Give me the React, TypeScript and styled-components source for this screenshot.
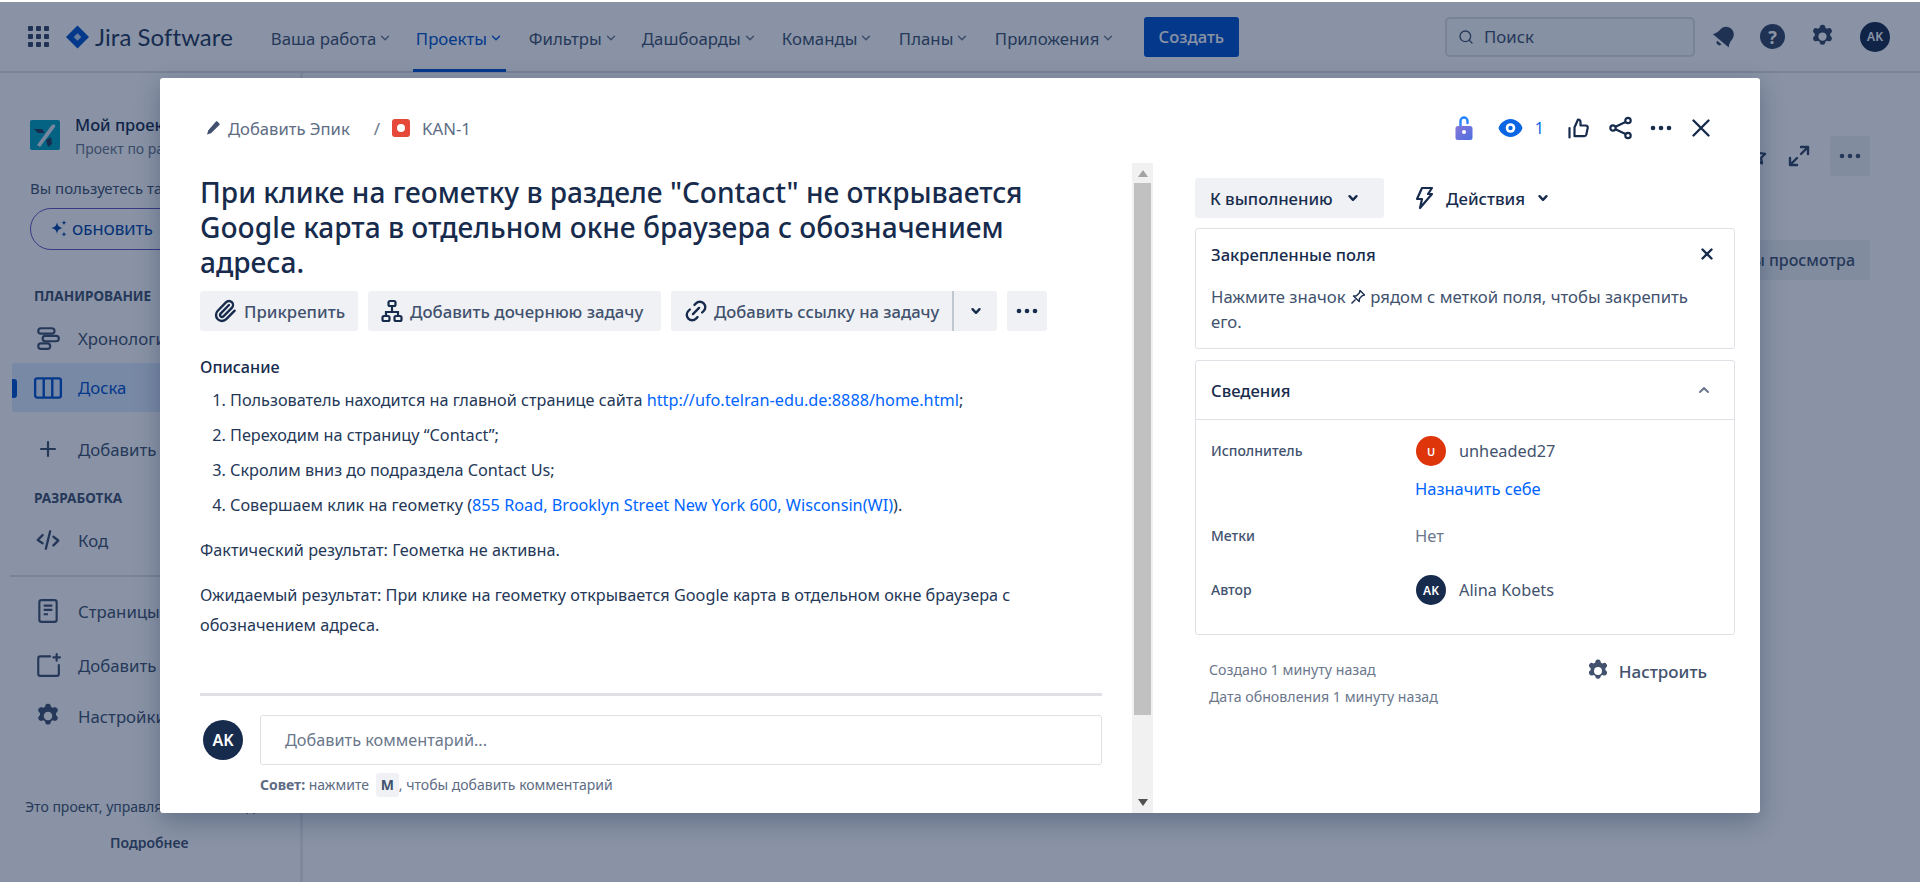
import styled, { createGlobalStyle } from 'styled-components';
import { ChevronDown, ChevronUp, Search, Plus, X, Link2, Paperclip } from 'lucide-react';

const GlobalStyle = createGlobalStyle`
  html, body {
    margin: 0;
    padding: 0;
    background: #fff;
    font-family: "Noto Sans", "Open Sans", sans-serif;
    color: #172b4d;
  }
  * {
    box-sizing: border-box;
  }
`;

const navItems = [
  { label: 'Ваша работа', width: 145 },
  { label: 'Проекты', width: 113, active: true },
  { label: 'Фильтры', width: 113 },
  { label: 'Дашбоарды', width: 140 },
  { label: 'Команды', width: 117 },
  { label: 'Планы', width: 96 },
  { label: 'Приложения', width: 149 },
];

function GearIcon({ size = 24 }: { size?: number }) {
  return (
    <svg width={size} height={size} viewBox="2.500 1.500 19 20" fill="none">
      <path
        fillRule="evenodd"
        clipRule="evenodd"
        fill="currentColor"
        d="M11.7 2h.6c.9 0 1.6.6 1.8 1.4l.3 1.2c.4.2.8.3 1.2.6l1.2-.4c.8-.3 1.7.1 2.2.8l.3.5c.4.8.3 1.7-.3 2.3l-.9.9c.1.5.1 1 0 1.4l.9.9c.6.6.7 1.5.3 2.3l-.3.5c-.5.7-1.4 1.1-2.2.8l-1.2-.4c-.4.3-.8.4-1.2.6l-.3 1.2c-.2.8-.9 1.4-1.8 1.4h-.6c-.9 0-1.6-.6-1.8-1.4l-.3-1.2c-.4-.2-.8-.3-1.2-.6l-1.2.4c-.8.3-1.7-.1-2.2-.8l-.3-.5c-.4-.8-.3-1.7.3-2.3l.9-.9a5 5 0 0 1 0-1.4l-.9-.9c-.6-.6-.7-1.5-.3-2.3l.3-.5c.5-.7 1.4-1.1 2.2-.8l1.2.4c.4-.3.8-.4 1.2-.6l.3-1.2C10.1 2.6 10.800 2 11.700 2ZM12 8.200a3.300 3.300 0 1 0 0 6.600 3.300 3.300 0 0 0 0-6.600Z"
      />
    </svg>
  );
}

function DotsIcon() {
  return (
    <svg width="24" height="24" viewBox="0 0 24 24" fill="currentColor">
      <circle cx="4" cy="12" r="2.300" />
      <circle cx="12" cy="12" r="2.300" />
      <circle cx="20" cy="12" r="2.300" />
    </svg>
  );
}

function SmallChevron() {
  return (
    <svg width="12" height="12" viewBox="0 0 12 12" fill="none" stroke="currentColor" strokeWidth="2.400" strokeLinecap="round" strokeLinejoin="round">
      <path d="M2.500 4.200 6 7.800l3.500-3.600" />
    </svg>
  );
}

function App() {
  return (
    <>
      <GlobalStyle />
      <Page>
        <TopBar>
          <GridIcon>
            {Array.from({ length: 9 }).map((_, index) => (
              <i key={index} />
            ))}
          </GridIcon>
          <Logo>
            <svg width="23" height="24" viewBox="0 0 24 24">
              <path fill="#0052cc" d="M12 0 24 12 12 24 0 12Z" />
              <path fill="#c0d6f5" d="M12 8 16 12 12 16 8 12Z" />
            </svg>
            <span>Jira Software</span>
          </Logo>
          <Nav>
            {navItems.map((item) => (
              <NavItem key={item.label} $active={item.active} $width={item.width}>
                {item.label}
                <ChevronDown size={14} strokeWidth={2.4} />
              </NavItem>
            ))}
          </Nav>
          <CreateButton>Создать</CreateButton>
          <SearchBox>
            <Search size={16} strokeWidth={2} />
            <span>Поиск</span>
          </SearchBox>
          <TopIcons>
            <svg width="22" height="26" viewBox="2 2 20 20" fill="currentColor">
              <g transform="rotate(40 12 12)">
                <path d="M12 2a7 7 0 0 0-7 7c0 5-2.500 7.500-2.500 7.500h19S19 14 19 9a7 7 0 0 0-7-7Z" />
                <path d="M9.500 18.500h5a2.500 2.500 0 0 1-5 0Z" />
              </g>
            </svg>
            <HelpIcon>?</HelpIcon>
            <GearIcon size={25} />
            <Avatar $size={30} $font={12}>AK</Avatar>
          </TopIcons>
        </TopBar>

        <Workspace>
          <Sidebar>
            <ProjectRow>
              <ProjectLogo>
                <svg width="30" height="30" viewBox="0 0 30 30">
                  <rect width="30" height="30" rx="2" fill="#00a3bf" />
                  <path fill="#dfe6f2" d="M7 25 21 6c2-2 5-2 4 1L10 27Z" />
                  <path fill="#253858" d="M4 9h8l3 4H8ZM16 20l5-3 1 7-4 3Z" />
                </svg>
              </ProjectLogo>
              <div>
                <ProjectName>Мой проект</ProjectName>
                <ProjectType>Проект по разработке</ProjectType>
              </div>
            </ProjectRow>
            <PlanNote>Вы пользуетесь тарифом Free</PlanNote>
            <UpgradeButton>
              <svg width="18" height="18" viewBox="0 0 18 18" fill="#0747a6">
                <path d="M7 2c.7 4 2 5.300 6 6-4 .7-5.300 2-6 6-.7-4-2-5.300-6-6 4-.7 5.300-2 6-6ZM14 0c.3 1.800.9 2.400 2.700 2.700-1.800.3-2.400.9-2.700 2.700-.3-1.800-.9-2.400-2.700-2.700C13.100 2.400 13.700 1.800 14 0ZM14 11.500c.3 1.800.9 2.400 2.700 2.700-1.800.3-2.400.9-2.700 2.700-.3-1.800-.9-2.400-2.700-2.700 1.800-.3 2.400-.9 2.700-2.700Z" />
              </svg>
              ОБНОВИТЬ
            </UpgradeButton>
            <SectionTitle $top={36}>Планирование</SectionTitle>
            <SideItem>
              <svg width="26" height="26" viewBox="0 0 24 24" fill="none" stroke="currentColor" strokeWidth="2">
                <rect x="3" y="3" width="15" height="5" rx="2.500" />
                <rect x="7" y="10" width="15" height="5" rx="2.500" />
                <rect x="3" y="17" width="11" height="5" rx="2.500" />
              </svg>
              Хронология
            </SideItem>
            <SideItem $active $top={-1}>
              <svg width="30" height="26" viewBox="0 0 28 24" fill="none" stroke="currentColor" strokeWidth="2.200">
                <rect x="2" y="3" width="24" height="18" rx="2" />
                <path d="M10 3v18M18 3v18" />
              </svg>
              Доска
            </SideItem>
            <SideItem $top={11}>
              <Plus size={24} strokeWidth={2.2} />
              Добавить вид
            </SideItem>
            <SectionTitle $top={13}>Разработка</SectionTitle>
            <SideItem>
              <svg width="26" height="26" viewBox="0 0 24 24" fill="none" stroke="currentColor" strokeWidth="2.200" strokeLinecap="round" strokeLinejoin="round">
                <path d="M7 7.500 2.500 12 7 15M17 9l4.500 3.500L17 17M14 4l-4 16" />
              </svg>
              Код
            </SideItem>
            <SideDivider />
            <SideItem>
              <svg width="26" height="26" viewBox="0 0 24 24" fill="none" stroke="currentColor" strokeWidth="2">
                <rect x="4" y="2" width="16" height="20" rx="2" />
                <path d="M8 7h8M8 11h8M8 15h4" />
              </svg>
              Страницы
            </SideItem>
            <SideItem $top={2}>
              <svg width="26" height="26" viewBox="0 0 24 24" fill="none" stroke="currentColor" strokeWidth="2" strokeLinecap="round">
                <path d="M14 4H5a2 2 0 0 0-2 2v14a2 2 0 0 0 2 2h15a2 2 0 0 0 2-2v-8" />
                <path d="M20 2v6M17 5h6" />
              </svg>
              Добавить элемент
            </SideItem>
            <SideItem $top={-1}>
              <GearIcon size={26} />
              Настройки
            </SideItem>
            <SideFooter>Это проект, управляемый командой</SideFooter>
            <SideMore>Подробнее</SideMore>
          </Sidebar>
          <Main>
            <MainActions>
              <svg width="22" height="22" viewBox="0 0 24 24" fill="none" stroke="currentColor" strokeWidth="2.400" strokeLinejoin="round">
                <path d="m12 3 2.800 5.700 6.200.9-4.500 4.400 1 6.200-5.500-2.900-5.500 2.900 1-6.200L3 9.600l6.200-.9Z" />
              </svg>
              <svg width="24" height="24" viewBox="0 0 24 24" fill="none" stroke="currentColor" strokeWidth="2.400" strokeLinecap="round" strokeLinejoin="round">
                <path d="M14 3h7v7M21 3l-7 7M3 14v7h7M3 21l7-7" />
              </svg>
              <GhostButton $square>
                <DotsIcon />
              </GhostButton>
            </MainActions>
            <ViewButtonRow>
              <GhostButton>Параметры просмотра</GhostButton>
            </ViewButtonRow>
          </Main>
        </Workspace>

        <Overlay>
          <Modal>
            <ModalHead>
              <Breadcrumbs>
                <svg width="16" height="16" viewBox="0 0 16 16" fill="#42526e">
                  <path d="M11 1.500c.4-.4 1-.4 1.400 0l2 2c.4.4.4 1 0 1.400L6 13.300l-4 1.300 1.300-4.300Z" />
                </svg>
                <CrumbText>Добавить Эпик</CrumbText>
                <CrumbSlash>/</CrumbSlash>
                <BugIcon />
                <CrumbKey>KAN-1</CrumbKey>
              </Breadcrumbs>
              <HeadIcons>
                <HeadIcon>
                  <svg width="18" height="24" viewBox="0 0 18 24">
                    <defs>
                      <linearGradient id="lockFill" x1="0" y1="0" x2="1" y2="1">
                        <stop offset="0" stopColor="#8777d9" />
                        <stop offset="1" stopColor="#4c6fe0" />
                      </linearGradient>
                    </defs>
                    <path d="M5.500 7V5a3.500 3.500 0 0 1 7 0v5" fill="none" stroke="#2684ff" strokeWidth="2.400" strokeLinecap="round" transform="matrix(-1 0 0 1 18 0)" />
                    <rect x="0.500" y="10" width="17" height="14" rx="2.500" fill="url(#lockFill)" />
                    <circle cx="9" cy="16" r="2" fill="#fff" />
                  </svg>
                </HeadIcon>
                <HeadIcon $left={25}>
                  <svg width="25" height="20" viewBox="0 0 25 20">
                    <path fill="#0c66e4" d="M12.500 1C19 1 23.500 6.500 24.500 10 23.500 13.500 19 19 12.500 19S1.500 13.500.5 10C1.500 6.500 6 1 12.500 1Z" />
                    <circle cx="12.500" cy="10" r="4.800" fill="#fff" />
                    <circle cx="12.500" cy="10" r="2.200" fill="#0c66e4" />
                  </svg>
                </HeadIcon>
                <WatchCount>1</WatchCount>
                <HeadIcon $left={24}>
                  <svg width="22" height="22" viewBox="0 0 22 22" fill="none" stroke="#172b4d" strokeWidth="2.200" strokeLinejoin="round" strokeLinecap="round">
                    <path d="M6.500 10.500 10 2.500c1.500 0 2.500 1 2.500 2.500v3.500h5.200c1.400 0 2.300 1.100 2 2.400l-1.400 6.700c-.2 1-1 1.600-2 1.600H6.500ZM1.500 11v9.500" />
                  </svg>
                </HeadIcon>
                <HeadIcon $left={19}>
                  <svg width="24" height="24" viewBox="0 0 24 24" fill="none" stroke="#172b4d" strokeWidth="2.200">
                    <circle cx="19" cy="4.500" r="2.700" />
                    <circle cx="4" cy="12" r="2.700" />
                    <circle cx="19" cy="19.500" r="2.700" />
                    <path d="M6.500 10.700 16.500 6M6.500 13.300 16.500 18" />
                  </svg>
                </HeadIcon>
                <HeadIcon $left={16}>
                  <DotsIcon />
                </HeadIcon>
                <HeadIcon $left={19}>
                  <svg width="18" height="18" viewBox="0 0 18 18" fill="none" stroke="currentColor" strokeWidth="2.400" strokeLinecap="round">
                    <path d="M1.500 1.500l15 15M16.500 1.500l-15 15" />
                  </svg>
                </HeadIcon>
              </HeadIcons>
            </ModalHead>
            <ModalBody>
              <LeftPane>
                <Title>При клике на геометку в разделе "Contact" не открывается Google карта в отдельном окне браузера с обозначением адреса.</Title>
                <ActionRow>
                  <ActionButton $width={158}>
                    <Paperclip size={24} strokeWidth={2.4} />
                    Прикрепить
                  </ActionButton>
                  <ActionButton $width={293}>
                    <svg width="22" height="24" viewBox="0 0 22 24" fill="none" stroke="#172b4d" strokeWidth="2.200">
                      <rect x="7.500" y="2" width="7" height="5" rx="1.500" />
                      <rect x="1.500" y="17" width="7" height="5" rx="1.500" />
                      <rect x="13.500" y="17" width="7" height="5" rx="1.500" />
                      <path d="M11 7v6M5 17v-4h12v4" />
                    </svg>
                    Добавить дочернюю задачу
                  </ActionButton>
                  <SplitButton>
                    <SplitMain>
                      <Link2 size={26} strokeWidth={2.2} style={{ transform: 'rotate(-45deg)' }} />
                      Добавить ссылку на задачу
                    </SplitMain>
                    <SplitCaret>
                      <SmallChevron />
                    </SplitCaret>
                  </SplitButton>
                  <MoreButton>
                    <DotsIcon />
                  </MoreButton>
                </ActionRow>
                <DescriptionTitle>Описание</DescriptionTitle>
                <Steps>
                  <li>
                    Пользователь находится на главной странице сайта <DocLink>http://ufo.telran-edu.de:8888/home.html</DocLink>;
                  </li>
                  <li>Переходим на страницу “Contact”;</li>
                  <li>Скролим вниз до подраздела Contact Us;</li>
                  <li>
                    Совершаем клик на геометку (<DocLink>855 Road, Brooklyn Street New York 600, Wisconsin(WI)</DocLink>).
                  </li>
                </Steps>
                <ActualResult>Фактический результат: Геометка не активна.</ActualResult>
                <ExpectedResult>
                  Ожидаемый результат: При клике на геометку открывается Google карта в отдельном окне браузера с обозначением адреса.
                </ExpectedResult>
                <CommentDivider />
                <CommentRow>
                  <Avatar $size={40} $font={16}>AK</Avatar>
                  <CommentInput>Добавить комментарий...</CommentInput>
                </CommentRow>
                <CommentHint>
                  <b>Совет:</b> нажмите <Kbd>M</Kbd>, чтобы добавить комментарий
                </CommentHint>
              </LeftPane>
              <Scrollbar>
                <ScrollArrow $up />
                <ScrollThumb />
                <ScrollArrow />
              </Scrollbar>
              <RightPane>
                <StatusRow>
                  <StatusButton>
                    К выполнению
                    <SmallChevron />
                  </StatusButton>
                  <ActionsButton>
                    <svg width="20" height="24" viewBox="0 0 20 24" fill="none" stroke="#172b4d" strokeWidth="2.200" strokeLinejoin="round">
                      <path d="M8 2h10l-4 6h4L6 22l2-9H3Z" />
                    </svg>
                    Действия
                    <SmallChevron />
                  </ActionsButton>
                </StatusRow>
                <PinnedCard>
                  <PinnedHead>
                    Закрепленные поля
                    <X size={18} strokeWidth={3.2} />
                  </PinnedHead>
                  <PinnedText>
                    Нажмите значок{' '}
                    <svg width="16" height="16" viewBox="0 0 16 16" fill="none" stroke="#172b4d" strokeWidth="1.400" strokeLinejoin="round">
                      <path d="M10 1.500 14.500 6l-2 .6-3 3-.3 3L3.500 7l3-.3 3-3ZM5.500 10.500 1.500 14.500" />
                    </svg>{' '}
                    рядом с меткой поля, чтобы закрепить его.
                  </PinnedText>
                </PinnedCard>
                <DetailsCard>
                  <DetailsHead>
                    Сведения
                    <ChevronUp size={16} strokeWidth={3} color="#6b778c" />
                  </DetailsHead>
                  <DetailsGrid>
                    <FieldLabel>Исполнитель</FieldLabel>
                    <FieldValue>
                      <PersonRow>
                        <Avatar $size={30} $font={11} $color="#de350b">U</Avatar>
                        unheaded27
                      </PersonRow>
                      <AssignLink>Назначить себе</AssignLink>
                    </FieldValue>
                    <FieldLabel>Метки</FieldLabel>
                    <FieldValue>
                      <EmptyValue>Нет</EmptyValue>
                    </FieldValue>
                    <FieldLabel>Автор</FieldLabel>
                    <FieldValue>
                      <PersonRow>
                        <Avatar $size={30} $font={12}>AK</Avatar>
                        Alina Kobets
                      </PersonRow>
                    </FieldValue>
                  </DetailsGrid>
                </DetailsCard>
                <MetaRow>
                  <MetaDates>
                    <div>Создано 1 минуту назад</div>
                    <div>Дата обновления 1 минуту назад</div>
                  </MetaDates>
                  <ConfigureLink>
                    <GearIcon size={24} />
                    Настроить
                  </ConfigureLink>
                </MetaRow>
              </RightPane>
            </ModalBody>
          </Modal>
        </Overlay>
      </Page>
    </>
  );
}

const Page = styled.div`
  position: relative;
  width: 1920px;
  height: 882px;
  overflow: hidden;
  padding-top: 2px;
  background: #fff;
`;

const TopBar = styled.header`
  display: flex;
  align-items: center;
  height: 71px;
  padding: 0 30px 0 28px;
  border-bottom: 2px solid #dfe1e6;
`;

const GridIcon = styled.div`
  display: grid;
  grid-template-columns: repeat(3, 5px);
  gap: 3px;

  i {
    width: 5px;
    height: 5px;
    border-radius: 1px;
    background: #344563;
  }
`;

const Logo = styled.div`
  display: flex;
  align-items: center;
  gap: 6px;
  margin-left: 17px;
  font-family: "Lato", "Noto Sans", sans-serif;
  font-size: 23.900px;
  letter-spacing: 0.1px;
  color: #253858;
`;

const Nav = styled.nav`
  display: flex;
  height: 100%;
  margin-left: 38px;
`;

const NavItem = styled.div<{ $active?: boolean; $width: number }>`
  position: relative;
  display: flex;
  align-items: center;
  gap: 2px;
  width: ${(p) => p.$width}px;
  padding-top: 3px;
  font-size: 16.800px;
  color: ${(p) => (p.$active ? '#0052cc' : '#42526e')};

  svg {
    color: ${(p) => (p.$active ? '#0052cc' : '#6b778c')};
  }

  &::after {
    content: '';
    display: ${(p) => (p.$active ? 'block' : 'none')};
    position: absolute;
    left: -3px;
    bottom: -1px;
    width: 93px;
    height: 3px;
    background: #0052cc;
  }
`;

const CreateButton = styled.button`
  width: 95px;
  height: 40px;
  border: 0;
  border-radius: 3px;
  background: #0052cc;
  color: #fff;
  font: 500 16.600px "Noto Sans", sans-serif;
`;

const SearchBox = styled.div`
  display: flex;
  align-items: center;
  gap: 10px;
  width: 250px;
  height: 40px;
  margin-left: auto;
  padding: 0 0 0 11px;
  border: 2px solid #dfe1e6;
  border-radius: 5px;
  background: #fafbfc;
  color: #42526e;
  font-size: 16.800px;
`;

const TopIcons = styled.div`
  display: flex;
  align-items: center;
  gap: 25px;
  margin-left: 18px;
  color: #344563;
`;

const HelpIcon = styled.span`
  display: flex;
  align-items: center;
  justify-content: center;
  width: 25px;
  height: 25px;
  border-radius: 50%;
  background: #344563;
  color: #fff;
  font-size: 18px;
  font-weight: 700;
`;

const Avatar = styled.span<{ $size: number; $font: number; $color?: string }>`
  display: inline-flex;
  flex: none;
  align-items: center;
  justify-content: center;
  width: ${(p) => p.$size}px;
  height: ${(p) => p.$size}px;
  border-radius: 50%;
  background: ${(p) => p.$color || '#172b4d'};
  color: #fff;
  font-size: ${(p) => p.$font}px;
  font-weight: 600;
`;

const Workspace = styled.div`
  display: flex;
  height: 809px;
`;

const Sidebar = styled.aside`
  flex: none;
  width: 303px;
  padding: 40px 10px 0 12px;
  border-right: 3px solid #ebecf0;
  white-space: nowrap;
  overflow: hidden;
`;

const ProjectRow = styled.div`
  display: flex;
  gap: 15px;
  padding-left: 18px;
`;

const ProjectLogo = styled.div`
  flex: none;
  height: 30px;
  margin-top: 7px;
`;

const ProjectName = styled.div`
  font-size: 16.500px;
  font-weight: 500;
  line-height: 24px;
`;

const ProjectType = styled.div`
  font-size: 14px;
  line-height: 24px;
  color: #6b778c;
`;

const PlanNote = styled.div`
  margin: 16px 0 0 18px;
  font-size: 15px;
  line-height: 22px;
  color: #42526e;
`;

const UpgradeButton = styled.div`
  display: flex;
  align-items: center;
  gap: 4px;
  width: 170px;
  height: 42px;
  margin: 9px 0 0 18px;
  padding-left: 19px;
  border: 1.5px solid #6554c0;
  border-radius: 21px;
  color: #0747a6;
  font-size: 14.700px;
  font-weight: 500;
`;

const SectionTitle = styled.div<{ $top: number }>`
  margin: ${(p) => p.$top}px 0 6px 22px;
  font-size: 13.600px;
  font-weight: 700;
  line-height: 20px;
  text-transform: uppercase;
  color: #42526e;
`;

const SideItem = styled.div<{ $active?: boolean; $top?: number }>`
  position: relative;
  display: flex;
  align-items: center;
  gap: 15px;
  width: 100%;
  height: ${(p) => (p.$active ? 49 : 52)}px;
  margin-top: ${(p) => p.$top || 0}px;
  padding-left: 21px;
  border-radius: 3px;
  font-size: 16.800px;
  color: ${(p) => (p.$active ? '#0052cc' : '#42526e')};
  background: ${(p) => (p.$active ? '#deebff' : 'transparent')};

  svg {
    flex: none;
    width: 30px;
  }

  &::before {
    content: '';
    display: ${(p) => (p.$active ? 'block' : 'none')};
    position: absolute;
    left: 0;
    top: 16px;
    width: 5px;
    height: 19px;
    border-radius: 0 3px 3px 0;
    background: #0052cc;
  }
`;

const SideDivider = styled.div`
  height: 2px;
  margin: 9px 0 8px -2px;
  background: #dfe1e6;
`;

const SideFooter = styled.div`
  margin: 55px 0 0 13px;
  font-size: 14px;
  line-height: 20px;
  color: #42526e;
`;

const SideMore = styled.div`
  margin: 16px 0 0 98px;
  font-size: 14px;
  font-weight: 600;
  line-height: 20px;
  color: #42526e;
`;

const Main = styled.main`
  flex: 1;
  display: flex;
  flex-direction: column;
  align-items: flex-end;
  padding: 63px 50px 0 0;
`;

const MainActions = styled.div`
  display: flex;
  align-items: center;
  gap: 19px;
  color: #344563;
`;

const GhostButton = styled.div<{ $square?: boolean }>`
  display: flex;
  align-items: center;
  justify-content: center;
  width: ${(p) => (p.$square ? '40px' : 'auto')};
  height: 40px;
  padding: ${(p) => (p.$square ? '0' : '0 15px')};
  border-radius: 3px;
  background: #f0f1f4;
  color: #42526e;
  font-size: 16px;
  font-weight: 500;
`;

const ViewButtonRow = styled.div`
  margin-top: 64px;
`;

const Overlay = styled.div`
  position: absolute;
  inset: 2px 0 0 0;
  display: flex;
  justify-content: center;
  padding-top: 76px;
  background: rgba(9, 30, 66, 0.48);
`;

const Modal = styled.section`
  display: flex;
  flex-direction: column;
  width: 1600px;
  height: 735px;
  border-radius: 3px;
  background: #fff;
  box-shadow: 0 8px 24px rgba(9, 30, 66, 0.3);
  overflow: hidden;
`;

const ModalHead = styled.div`
  flex: none;
  display: flex;
  align-items: flex-start;
  justify-content: space-between;
  height: 85px;
  padding: 38px 50px 0 45px;
`;

const Breadcrumbs = styled.div`
  display: flex;
  align-items: center;
  height: 26px;
  margin-top: -1px;
`;

const CrumbText = styled.span`
  margin-left: 7px;
  font-size: 16.600px;
  color: #5e6c84;
`;

const CrumbSlash = styled.span`
  margin: 0 12px 0 24px;
  font-size: 17px;
  color: #6b778c;
`;

const BugIcon = styled.span`
  display: inline-flex;
  align-items: center;
  justify-content: center;
  width: 18px;
  height: 18px;
  border-radius: 3px;
  background: #e5493a;

  &::after {
    content: '';
    width: 8px;
    height: 8px;
    border-radius: 50%;
    background: #fff;
  }
`;

const CrumbKey = styled.span`
  margin-left: 12px;
  font-size: 16.800px;
  color: #5e6c84;
`;

const HeadIcons = styled.div`
  display: flex;
  align-items: center;
  color: #172b4d;
`;

const HeadIcon = styled.span<{ $left?: number }>`
  display: flex;
  margin-left: ${(p) => p.$left || 0}px;
`;

const WatchCount = styled.span`
  margin-left: 12px;
  font-size: 16px;
  color: #0c66e4;
`;

const ModalBody = styled.div`
  flex: 1;
  display: flex;
  min-height: 0;
`;

const LeftPane = styled.div`
  flex: none;
  width: 972px;
  padding: 12px 30px 0 40px;
`;

const Title = styled.h1`
  margin: 0;
  font-size: 28.100px;
  font-weight: 500;
  line-height: 35px;
  color: #172b4d;
`;

const ActionRow = styled.div`
  display: flex;
  gap: 10px;
  margin-top: 11px;
`;

const ActionButton = styled.button<{ $width: number }>`
  display: flex;
  align-items: center;
  gap: 7px;
  width: ${(p) => p.$width}px;
  height: 40px;
  padding: 0 0 0 13px;
  border: 0;
  border-radius: 3px;
  background: #f0f1f4;
  color: #42526e;
  font: 500 16.800px "Noto Sans", sans-serif;

  svg {
    flex: none;
    color: #172b4d;
  }
`;

const SplitButton = styled.div`
  display: flex;
  height: 40px;
  border-radius: 3px;
  background: #f0f1f4;
`;

const SplitMain = styled.div`
  display: flex;
  align-items: center;
  gap: 5px;
  width: 283px;
  padding-left: 12px;
  border-right: 2px solid #c1c7d0;
  color: #42526e;
  font-size: 16.600px;
  font-weight: 500;

  svg {
    flex: none;
    color: #172b4d;
  }
`;

const SplitCaret = styled.div`
  display: flex;
  align-items: center;
  justify-content: center;
  width: 43px;
`;

const MoreButton = styled.div`
  display: flex;
  align-items: center;
  justify-content: center;
  width: 40px;
  height: 40px;
  border-radius: 3px;
  background: #f0f1f4;
  color: #172b4d;
`;

const DescriptionTitle = styled.div`
  margin-top: 24px;
  font-size: 16.200px;
  font-weight: 500;
  line-height: 24px;
  color: #172b4d;
`;

const Steps = styled.ol`
  margin: 4px 0 0;
  padding: 0 0 0 30px;
  font-size: 16.250px;
  line-height: 35px;
  color: #253858;
`;

const DocLink = styled.span`
  color: #0065ff;
`;

const ActualResult = styled.p`
  margin: 12px 0 0;
  font-size: 16.250px;
  line-height: 30px;
  color: #253858;
`;

const ExpectedResult = styled(ActualResult)`
  margin-top: 15px;
`;

const CommentDivider = styled.div`
  height: 3px;
  margin-top: 53px;
  background: #dfe1e6;
`;

const CommentRow = styled.div`
  display: flex;
  align-items: center;
  gap: 17px;
  margin-top: 19px;
  padding-left: 3px;
`;

const CommentInput = styled.div`
  flex: 1;
  height: 50px;
  padding-left: 24px;
  border: 1px solid #dfe1e6;
  border-radius: 3px;
  font-size: 16.300px;
  line-height: 48px;
  color: #6b778c;
`;

const CommentHint = styled.div`
  margin: 8px 0 0 60px;
  font-size: 14px;
  line-height: 24px;
  color: #5e6c84;
`;

const Kbd = styled.span`
  display: inline-block;
  margin-left: 3px;
  padding: 0 5px;
  border-radius: 3px;
  background: #f0f1f4;
  font-weight: 700;
  color: #42526e;
`;

const Scrollbar = styled.div`
  flex: none;
  display: flex;
  flex-direction: column;
  align-items: center;
  width: 21px;
  background: #f1f1f1;
`;

const ScrollArrow = styled.div<{ $up?: boolean }>`
  flex: none;
  width: 0;
  height: 0;
  margin: ${(p) => (p.$up ? '7px 0 6px' : 'auto 0 7px')};
  border-left: 5px solid transparent;
  border-right: 5px solid transparent;
  ${(p) => (p.$up ? 'border-bottom: 7px solid #a3a3a3;' : 'border-top: 7px solid #505050;')}
`;

const ScrollThumb = styled.div`
  flex: none;
  width: 17px;
  height: 532px;
  background: #c1c1c1;
`;

const RightPane = styled.div`
  flex: 1;
  padding: 15px 25px 0 42px;
`;

const StatusRow = styled.div`
  display: flex;
  gap: 30px;
`;

const StatusButton = styled.div`
  display: flex;
  align-items: center;
  gap: 14px;
  width: 189px;
  height: 40px;
  padding-left: 15px;
  border-radius: 3px;
  background: #f0f1f4;
  color: #172b4d;
  font-size: 16.700px;
  font-weight: 500;
`;

const ActionsButton = styled.div`
  display: flex;
  align-items: center;
  gap: 12px;
  color: #172b4d;
  font-size: 16.800px;
  font-weight: 500;
`;

const PinnedCard = styled.div`
  height: 121px;
  margin-top: 10px;
  padding: 0 15px;
  border: 1px solid #dfe1e6;
  border-radius: 3px;
`;

const PinnedHead = styled.div`
  display: flex;
  align-items: center;
  justify-content: space-between;
  height: 44px;
  margin-top: 3px;
  padding-right: 3px;
  font-size: 16.600px;
  font-weight: 500;
  color: #172b4d;
`;

const PinnedText = styled.div`
  margin-top: 8px;
  font-size: 16.700px;
  line-height: 25px;
  color: #42526e;

  svg {
    vertical-align: -2px;
  }
`;

const DetailsCard = styled.div`
  height: 275px;
  margin-top: 11px;
  border: 1px solid #dfe1e6;
  border-radius: 3px;
`;

const DetailsHead = styled.div`
  display: flex;
  align-items: center;
  justify-content: space-between;
  height: 59px;
  padding: 0 22px 0 15px;
  border-bottom: 1px solid #dfe1e6;
  font-size: 16.600px;
  font-weight: 500;
  color: #172b4d;
`;

const DetailsGrid = styled.div`
  display: grid;
  grid-template-columns: 204px 1fr;
  padding: 16px 15px 0;
`;

const FieldLabel = styled.div`
  font-size: 14px;
  font-weight: 500;
  line-height: 30px;
  color: #42526e;
`;

const FieldValue = styled.div`
  margin-bottom: 24px;
  font-size: 16.500px;
  color: #42526e;
`;

const PersonRow = styled.div`
  display: flex;
  align-items: center;
  gap: 13px;
  height: 30px;
  padding-left: 1px;
  font-size: 16.300px;
`;

const AssignLink = styled.div`
  margin: 11px 0 -4px;
  font-size: 16.500px;
  line-height: 24px;
  color: #0065ff;
`;

const EmptyValue = styled.div`
  line-height: 30px;
  color: #6b778c;
`;

const MetaRow = styled.div`
  display: flex;
  justify-content: space-between;
  padding: 21px 28px 0 14px;
`;

const MetaDates = styled.div`
  font-size: 14.200px;
  line-height: 27px;
  color: #6b778c;
`;

const ConfigureLink = styled.div`
  display: flex;
  align-items: center;
  gap: 9px;
  height: 26px;
  margin-top: 2px;
  font-size: 17px;
  font-weight: 500;
  color: #42526e;
`;

export default App;
